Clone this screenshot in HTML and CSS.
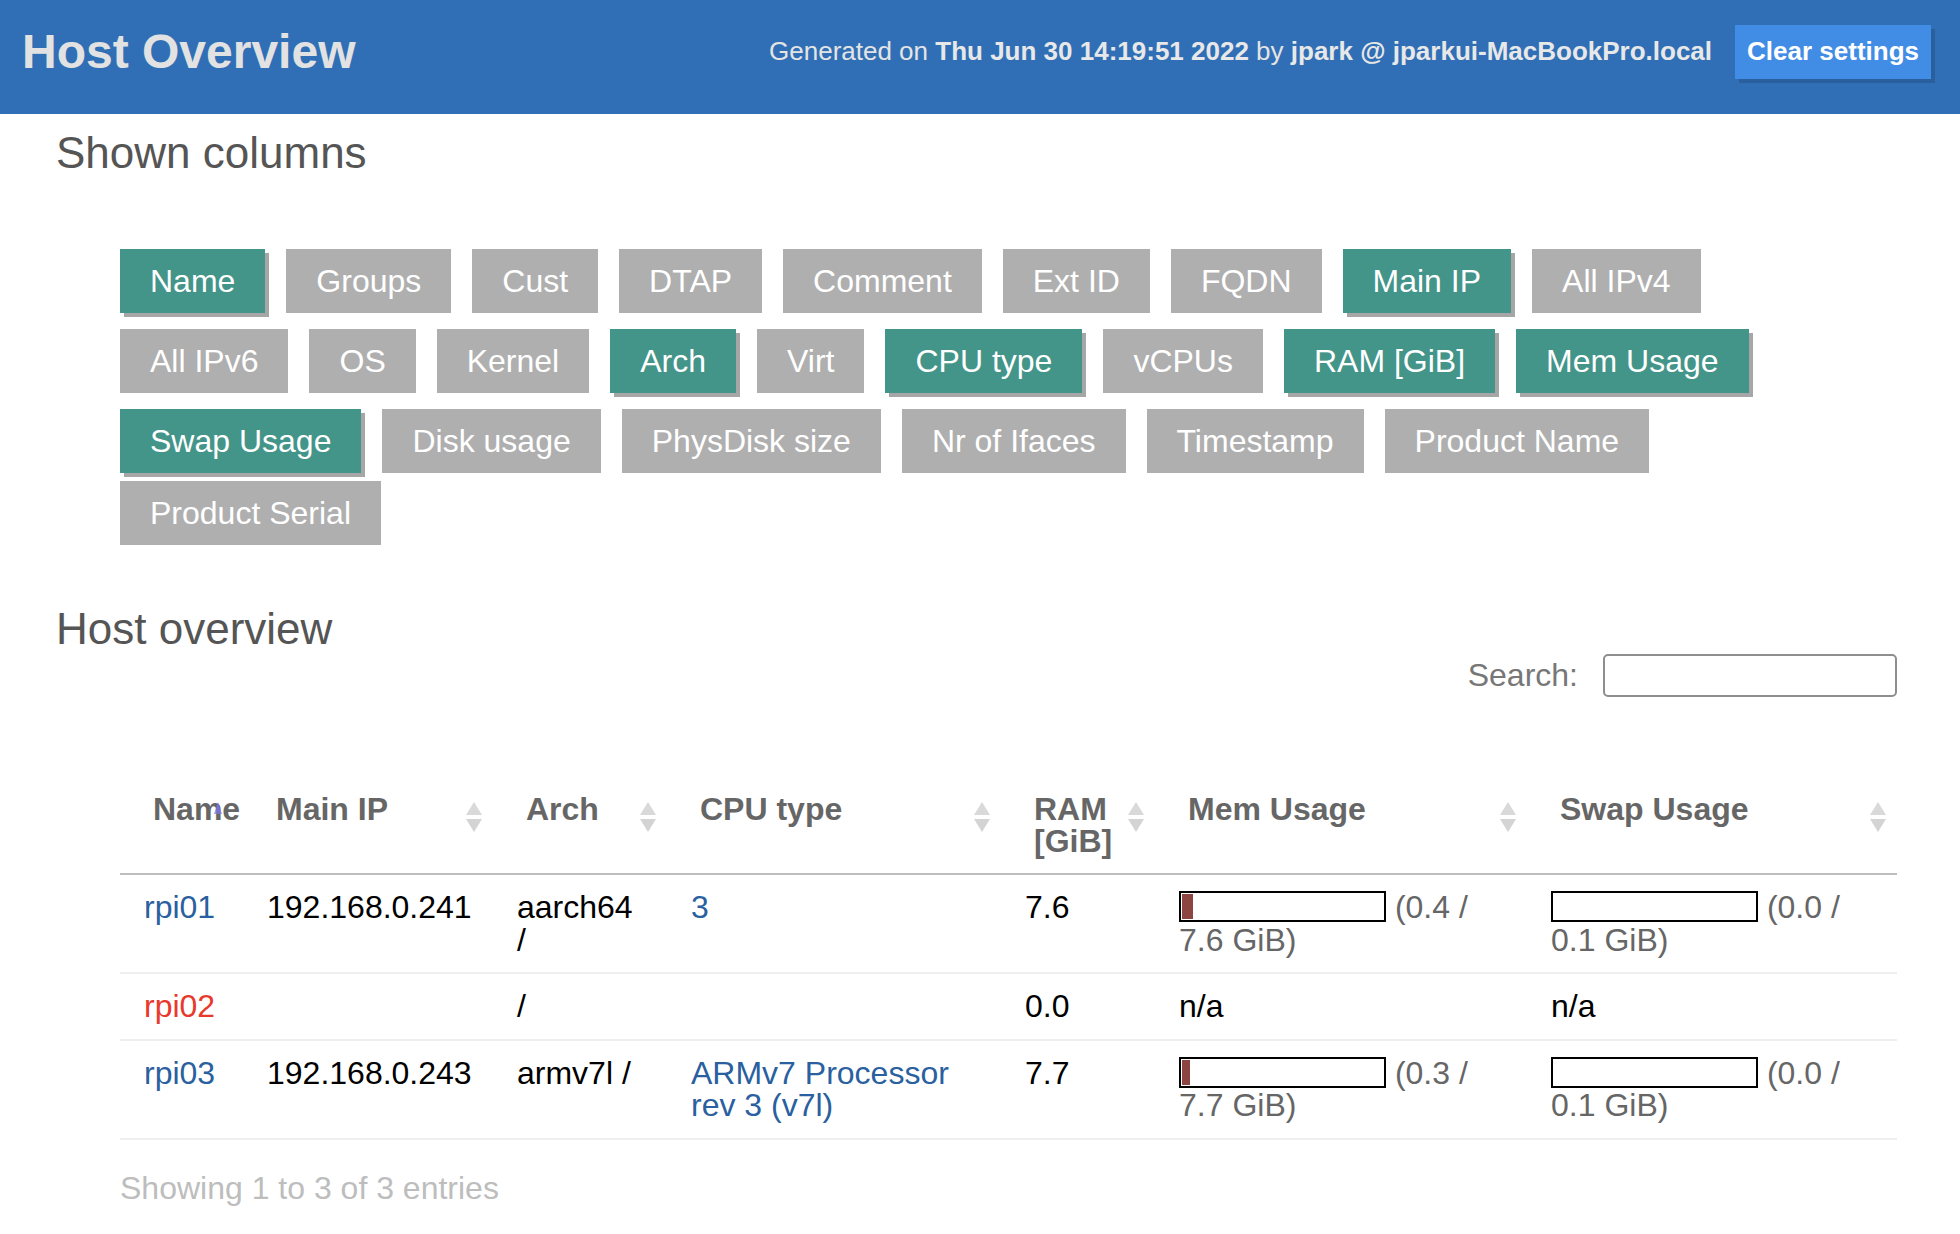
FILE: index.html
```html
<!DOCTYPE html>
<html lang="en">
<head>
<meta charset="utf-8">
<title>Host Overview</title>
<link rel="stylesheet" href="styles.css">
</head>
<body>
<header class="topbar">
  <h1 class="title">Host Overview</h1>
  <div class="topbar-right">
    <span class="generated">Generated on <b>Thu Jun 30 14:19:51 2022</b> by <b>jpark @ jparkui-MacBookPro.local</b></span>
    <button class="clear-btn" type="button">Clear settings</button>
  </div>
</header>
<main class="content">
  <h2 class="section-title">Shown columns</h2>
  <div class="col-toggles">
    <span class="toggle on">Name</span>
    <span class="toggle">Groups</span>
    <span class="toggle">Cust</span>
    <span class="toggle">DTAP</span>
    <span class="toggle">Comment</span>
    <span class="toggle">Ext ID</span>
    <span class="toggle">FQDN</span>
    <span class="toggle on">Main IP</span>
    <span class="toggle">All IPv4</span>
    <span class="toggle">All IPv6</span>
    <span class="toggle">OS</span>
    <span class="toggle">Kernel</span>
    <span class="toggle on">Arch</span>
    <span class="toggle">Virt</span>
    <span class="toggle on">CPU type</span>
    <span class="toggle">vCPUs</span>
    <span class="toggle on">RAM [GiB]</span>
    <span class="toggle on">Mem Usage</span>
    <span class="toggle on">Swap Usage</span>
    <span class="toggle">Disk usage</span>
    <span class="toggle">PhysDisk size</span>
    <span class="toggle">Nr of Ifaces</span>
    <span class="toggle">Timestamp</span>
    <span class="toggle">Product Name</span>
    <span class="toggle last-row">Product Serial</span>
  </div>

  <h2 class="section-title second">Host overview</h2>
  <div class="table-wrap">
    <div class="filter">
      <label class="filter-label" for="q">Search:</label>
      <input class="filter-input" id="q" type="search">
    </div>
    <table class="hosts">
      <thead>
        <tr>
          <th class="c-name">Name<span class="sort-asc"></span></th>
          <th class="c-ip">Main IP<span class="sort"><i class="up"></i><i class="down"></i></span></th>
          <th class="c-arch">Arch<span class="sort"><i class="up"></i><i class="down"></i></span></th>
          <th class="c-cpu">CPU type<span class="sort"><i class="up"></i><i class="down"></i></span></th>
          <th class="c-ram">RAM [GiB]<span class="sort"><i class="up"></i><i class="down"></i></span></th>
          <th class="c-mem">Mem Usage<span class="sort"><i class="up"></i><i class="down"></i></span></th>
          <th class="c-swap">Swap Usage<span class="sort"><i class="up"></i><i class="down"></i></span></th>
        </tr>
      </thead>
      <tbody>
        <tr>
          <td><a class="host" href="#">rpi01</a></td>
          <td>192.168.0.241</td>
          <td>aarch64 /</td>
          <td><a class="link" href="#">3</a></td>
          <td>7.6</td>
          <td><span class="bar"><span class="fill" style="width:5.5%"></span></span> <span class="usage">(0.4 / 7.6 GiB)</span></td>
          <td><span class="bar"><span class="fill" style="width:0%"></span></span> <span class="usage">(0.0 / 0.1 GiB)</span></td>
        </tr>
        <tr>
          <td><a class="host down-host" href="#">rpi02</a></td>
          <td></td>
          <td>/</td>
          <td></td>
          <td>0.0</td>
          <td>n/a</td>
          <td>n/a</td>
        </tr>
        <tr>
          <td><a class="host" href="#">rpi03</a></td>
          <td>192.168.0.243</td>
          <td>armv7l /</td>
          <td><a class="link" href="#">ARMv7 Processor rev 3 (v7l)</a></td>
          <td>7.7</td>
          <td><span class="bar"><span class="fill" style="width:3.9%"></span></span> <span class="usage">(0.3 / 7.7 GiB)</span></td>
          <td><span class="bar"><span class="fill" style="width:0%"></span></span> <span class="usage">(0.0 / 0.1 GiB)</span></td>
        </tr>
      </tbody>
    </table>
    <div class="info">Showing 1 to 3 of 3 entries</div>
  </div>
</main>
</body>
</html>
```
FILE: styles.css
```css
* { box-sizing: border-box; }

html, body {
  margin: 0;
  padding: 0;
  background: #ffffff;
}

body {
  font-family: "Liberation Sans", Arial, Helvetica, sans-serif;
  color: #000;
}

/* ---------- top bar ---------- */
.topbar {
  display: flex;
  align-items: center;
  justify-content: space-between;
  height: 114px;
  padding: 0 29px 11px 22px;
  background: #306fb5;
}

.title {
  margin: 0;
  font-size: 48px;
  font-weight: 700;
  line-height: 56px;
  color: #e2e2e2;
}

.topbar-right {
  display: flex;
  align-items: center;
  gap: 23px;
}

.generated {
  font-size: 26px;
  color: #e4e4e4;
  white-space: nowrap;
}

.generated b {
  font-weight: 700;
  color: #e8e8e8;
}

.clear-btn {
  height: 54px;
  padding: 0 12px;
  border: none;
  background: #418ce5;
  color: #ffffff;
  font-family: inherit;
  font-size: 26px;
  font-weight: 700;
  box-shadow: 4px 4px 0 #2b5e9c;
  cursor: pointer;
}

/* ---------- content ---------- */
.content {
  padding: 0 63px 20px 56px;
}

.section-title {
  margin: 14px 0 0 0;
  font-size: 44px;
  font-weight: 400;
  line-height: 50px;
  color: #555555;
}

.section-title.second {
  margin-top: 43px;
}

/* ---------- column toggles ---------- */
.col-toggles {
  display: flex;
  flex-wrap: wrap;
  margin: 71px 0 0 64px;
}

.toggle {
  display: block;
  height: 64px;
  padding: 0 30px;
  margin: 0 21px 16px 0;
  background: #afafaf;
  color: #ffffff;
  font-size: 32px;
  line-height: 64px;
  white-space: nowrap;
}

.toggle.on {
  background: #439489;
  box-shadow: 4px 4px 0 #a6a6a6;
}

.toggle.last-row {
  margin-top: -8px;
}

/* ---------- table area ---------- */
.table-wrap {
  margin-left: 64px;
}

.filter {
  display: flex;
  justify-content: flex-end;
  align-items: center;
  gap: 25px;
  height: 43px;
}

.filter-label {
  font-size: 32px;
  color: #777777;
}

.filter-input {
  width: 294px;
  height: 43px;
  border: 2px solid #8e8e8e;
  border-radius: 5px;
  background: #fff;
  font-size: 28px;
  font-family: inherit;
  outline: none;
}

.hosts {
  width: 100%;
  margin-top: 76px;
  table-layout: fixed;
  border-collapse: separate;
  border-spacing: 0;
  font-size: 32px;
  line-height: 32px;
}

.hosts th {
  position: relative;
  padding: 20px 30px 16px 33px;
  text-align: left;
  vertical-align: top;
  font-weight: 700;
  color: #666666;
  border-bottom: 2px solid #bdbdbd;
}

.hosts td {
  padding: 16px 24px 16px 24px;
  line-height: 32.5px;
  vertical-align: top;
  border-bottom: 2px solid #efefef;
  color: #000;
}

.c-name { width: 123px; }
.c-ip   { width: 250px; }
.c-arch { width: 174px; }
.c-cpu  { width: 334px; }
.c-ram  { width: 154px; }
.c-mem  { width: 372px; }
.c-swap { width: 370px; }

/* sort indicators */
.sort {
  position: absolute;
  right: 11px;
  top: 29px;
  width: 16px;
  height: 30px;
  display: flex;
  flex-direction: column;
  justify-content: space-between;
}

.sort .up {
  display: block;
  width: 0;
  height: 0;
  border-left: 8px solid transparent;
  border-right: 8px solid transparent;
  border-bottom: 13px solid #d9d9d9;
}

.sort .down {
  display: block;
  width: 0;
  height: 0;
  border-left: 8px solid transparent;
  border-right: 8px solid transparent;
  border-top: 13px solid #d4d4d4;
}

.sort-asc {
  position: absolute;
  right: 21px;
  top: 29px;
  width: 0;
  height: 0;
  border-left: 4px solid transparent;
  border-right: 4px solid transparent;
  border-bottom: 12px solid rgba(120, 120, 235, 0.75);
}

.host {
  color: #2a5fa0;
  text-decoration: none;
}

.host.down-host {
  color: #e8392c;
}

.link {
  color: #2a5fa0;
  text-decoration: none;
}

.bar {
  display: inline-block;
  vertical-align: top;
  width: 207px;
  height: 31px;
  border: 2px solid #000;
  padding: 1px;
  background: #fff;
}

.fill {
  display: block;
  height: 100%;
  background: #8c4541;
}

.usage {
  color: #666666;
}

.info {
  margin-top: 28px;
  font-size: 32px;
  line-height: 40px;
  color: #bdbdbd;
}
```
